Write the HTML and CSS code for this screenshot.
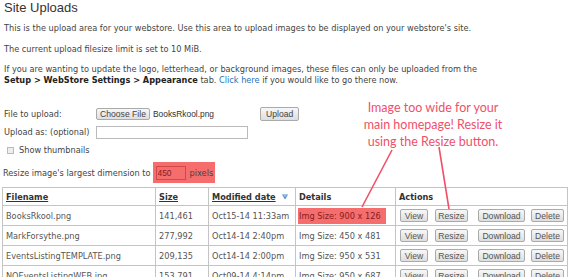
FILE: index.html
```html
<!DOCTYPE html>
<html lang="en">
<head>
    <meta charset="UTF-8">
    <meta name="viewport" content="width=device-width, initial-scale=1.0">
    <title>Site Uploads</title>
    <link rel="stylesheet" href="styles.css">
</head>
<body>
    <div class="page">
        <h1>Site Uploads</h1>
        <p class="intro">This is the upload area for your webstore. Use this area to upload images to be displayed on your webstore's site.</p>
        <p class="intro">The current upload filesize limit is set to 10 MiB.</p>
        <p class="intro">If you are wanting to update the logo, letterhead, or background images, these files can only be uploaded from the <b>Setup &gt; WebStore Settings &gt; Appearance</b> tab. <a href="#">Click here</a> if you would like to go there now.</p>

        <form class="upload-form">
            <div class="form-row">
                <label class="form-label">File to upload:</label>
                <button type="button" class="btn btn-file">Choose File</button>
                <span class="file-name">BooksRkool.png</span>
                <button type="button" class="btn">Upload</button>
            </div>
            <div class="form-row">
                <label class="form-label" for="uploadAs">Upload as: (optional)</label>
                <input type="text" id="uploadAs" class="text-input">
            </div>
            <div class="form-row check-row">
                <input type="checkbox" id="thumbs" class="check">
                <label for="thumbs">Show thumbnails</label>
            </div>
            <div class="form-row resize-row">
                <span>Resize image's largest dimension to</span>
                <span class="highlight-box">
                    <input type="text" class="size-input" value="450">
                    <span class="px-label">pixels</span>
                </span>
            </div>
        </form>

        <table class="files">
            <colgroup>
                <col class="col-name">
                <col class="col-size">
                <col class="col-date">
                <col class="col-details">
                <col class="col-actions">
            </colgroup>
            <thead>
                <tr>
                    <th><a href="#">Filename</a></th>
                    <th><a href="#">Size</a></th>
                    <th><a href="#">Modified date</a>
                        <svg class="sort-icon" width="6" height="6" viewBox="0 0 6 6"><polygon points="0,0.5 6,0.5 3,5.5" fill="#4a86cc"/><polygon points="1.2,1 4.8,1 3,3.6" fill="#9cc3ee"/></svg>
                    </th>
                    <th>Details</th>
                    <th>Actions</th>
                </tr>
            </thead>
            <tbody>
                <tr>
                    <td>BooksRkool.png</td>
                    <td>141,461</td>
                    <td>Oct15-14 11:33am</td>
                    <td><span class="too-wide">Img Size: 900 x 126</span></td>
                    <td><div class="actions"><button class="btn btn-view">View</button><button class="btn btn-resize">Resize</button><button class="btn btn-download">Download</button><button class="btn btn-delete">Delete</button></div></td>
                </tr>
                <tr>
                    <td>MarkForsythe.png</td>
                    <td>277,992</td>
                    <td>Oct14-14 2:40pm</td>
                    <td>Img Size: 450 x 481</td>
                    <td><div class="actions"><button class="btn btn-view">View</button><button class="btn btn-resize">Resize</button><button class="btn btn-download">Download</button><button class="btn btn-delete">Delete</button></div></td>
                </tr>
                <tr>
                    <td>EventsListingTEMPLATE.png</td>
                    <td>209,135</td>
                    <td>Oct14-14 2:00pm</td>
                    <td>Img Size: 950 x 531</td>
                    <td><div class="actions"><button class="btn btn-view">View</button><button class="btn btn-resize">Resize</button><button class="btn btn-download">Download</button><button class="btn btn-delete">Delete</button></div></td>
                </tr>
                <tr>
                    <td>NOEventsListingWEB.jpg</td>
                    <td>153,791</td>
                    <td>Oct09-14 4:14pm</td>
                    <td>Img Size: 950 x 687</td>
                    <td><div class="actions"><button class="btn btn-view">View</button><button class="btn btn-resize">Resize</button><button class="btn btn-download">Download</button><button class="btn btn-delete">Delete</button></div></td>
                </tr>
            </tbody>
        </table>

        <!-- annotation drawn over the screenshot -->
        <div class="callout">Image too wide for your<br>main homepage! Resize it<br>using the Resize button.</div>
        <svg class="callout-lines" width="575" height="277" viewBox="0 0 575 277">
            <line x1="392" y1="150" x2="362" y2="207" stroke="#f0506a" stroke-width="1.6"/>
            <line x1="439" y1="147" x2="449" y2="209" stroke="#f0506a" stroke-width="1.6"/>
        </svg>
    </div>
</body>
</html>
```

FILE: styles.css
```css
body {
    margin: 0;
    padding: 0;
    background: #fff;
    font-family: "DejaVu Sans", Verdana, sans-serif;
    font-size: 8.2px;
    color: #444;
}
.page {
    position: relative;
    padding: 0 4px;
    height: 277px;
    overflow: hidden;
}
h1 {
    margin: 0 0 8px;
    font-family: "Liberation Sans", Arial, sans-serif;
    font-size: 13px;
    font-weight: normal;
    line-height: 15px;
    color: #333;
}
.intro {
    margin: 0 0 9.5px;
    line-height: 11px;
    max-width: 490px;
}
.intro b {
    color: #222;
}
.intro a {
    color: #2b6fc0;
    text-decoration: none;
}
.upload-form {
    margin-top: 21px;
}
.form-row {
    display: flex;
    align-items: center;
    height: 14px;
    margin-bottom: 4px;
}
.form-label {
    width: 92px;
}
.btn {
    font-family: "Liberation Sans", Arial, sans-serif;
    font-size: 8.6px;
    color: #444;
    height: 14px;
    padding: 0 5px;
    line-height: 12px;
    white-space: nowrap;
    border: 1px solid #aaa;
    border-radius: 2px;
    background: linear-gradient(#f7f7f7, #dedede);
}
.btn-file {
    width: 54px;
    height: 12px;
    padding: 0;
    line-height: 10px;
}
.file-name {
    font-family: "Liberation Sans", Arial, sans-serif;
    font-size: 8.4px;
    color: #333;
    margin-left: 3px;
    width: 107px;
}
.text-input {
    width: 152px;
    height: 13px;
    box-sizing: border-box;
    border: 1px solid #bbb;
    padding: 0 2px;
    margin: 0;
}
.check-row {
    margin-top: 3px;
    margin-bottom: 5px;
}
.check {
    appearance: none;
    width: 7px;
    height: 7px;
    margin: 0 5px 0 3px;
    border: 1px solid #bbb;
    background: #eee;
}
.resize-row {
    height: 21px;
    margin-left: -1px;
}
.highlight-box {
    display: flex;
    align-items: center;
    height: 21px;
    margin-left: 2px;
    padding: 0 2px 0 3px;
    background: #f56d6d;
}
.size-input {
    width: 30px;
    height: 14px;
    box-sizing: border-box;
    margin: 0;
    padding: 0 1px;
    border: 1px solid #d04848;
    background: transparent;
    font-family: "Liberation Sans", Arial, sans-serif;
    font-size: 8.4px;
    color: #8a1c1c;
}
.px-label {
    margin-left: 4px;
}
.files {
    margin: 4px 0 0 -2px;
    width: 566px;
    border-collapse: collapse;
    table-layout: fixed;
    border: 1px solid #999;
}
.col-name { width: 153px; }
.col-size { width: 53px; }
.col-date { width: 87px; }
.col-details { width: 100px; }
.files th,
.files td {
    border: 1px solid #c4c4c4;
    padding: 0 3px;
    text-align: left;
    white-space: nowrap;
    overflow: hidden;
}
.files th {
    height: 17px;
    font-weight: bold;
    color: #333;
}
.files th a {
    color: #333;
}
.files td {
    height: 19px;
    color: #555;
}
.sort-icon {
    margin-left: 3px;
}
.too-wide {
    display: inline-block;
    width: 87px;
    height: 16px;
    line-height: 16px;
    margin-left: -1px;
    padding-left: 1px;
    background: #f56d6d;
    color: #8a1c1c;
}
.actions {
    display: flex;
    gap: 7px;
    padding-left: 1px;
}
.actions .btn {
    height: 13px;
    padding: 0;
    color: #555;
}
.btn-view { width: 28px; }
.btn-resize { width: 33px; margin-right: 3px; }
.btn-download { width: 47px; margin-right: -1px; }
.btn-delete { width: 33px; }
.callout {
    position: absolute;
    left: 340px;
    top: 99px;
    width: 186px;
    text-align: center;
    font-family: Lato, "Liberation Sans", sans-serif;
    font-size: 12.5px;
    line-height: 17px;
    color: #f0506a;
}
.callout-lines {
    position: absolute;
    left: 0;
    top: 0;
    pointer-events: none;
}
```
